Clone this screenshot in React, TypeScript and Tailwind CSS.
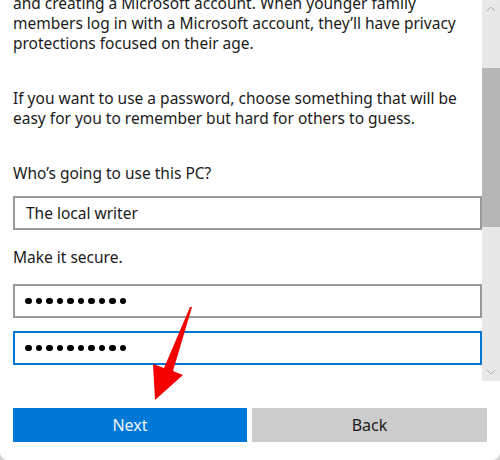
import React from 'react'

const font = { fontFamily: '"Noto Sans", "Open Sans", Arial, sans-serif' }

const Dots: React.FC = () => (
  <div className="flex items-center gap-[4px]">
    {Array.from({ length: 10 }).map((_, i) => (
      <span key={i} className="block w-[6.5px] h-[6.5px] rounded-full bg-black" />
    ))}
  </div>
)

const App: React.FC = () => {
  return (
    <div className="w-[500px] h-[460px] bg-[#d4d4d4] overflow-hidden" style={font}>
      <div className="relative w-[500px] h-[460px] bg-white rounded-b-[8px] flex flex-col">
        {/* scrolled area */}
        <div className="flex h-[381px]">
          <div className="w-[482px] overflow-hidden pl-[13px] text-[15.5px] leading-[20px] text-[#1b1b1b]">
            <div className="mt-[-7px]">
              <p>
                and creating a Microsoft account. When younger family
                <br />
                members log in with a Microsoft account, they’ll have privacy
                <br />
                protections focused on their age.
              </p>
              <p className="mt-[35px]">
                If you want to use a password, choose something that will be
                <br />
                easy for you to remember but hard for others to guess.
              </p>
              <p className="mt-[35px]">Who’s going to use this PC?</p>
              <div className="mt-[13px] h-[34px] border-2 border-[#9a9a9a] flex items-center pl-[11px]">
                The local writer
              </div>
              <p className="mt-[17px]">Make it secure.</p>
              <div className="mt-[17px] h-[34px] border-2 border-[#9a9a9a] flex items-center pl-[10px]">
                <Dots />
              </div>
              <div className="mt-[13px] h-[34px] border-2 border-[#0078d7] flex items-center pl-[10px]">
                <Dots />
              </div>
            </div>
          </div>
          {/* scrollbar */}
          <div className="w-[18px] h-[381px] bg-[#e8e8e8] flex flex-col items-center">
            <svg width="10" height="6" viewBox="0 0 10 6" className="mt-[6px]">
              <path d="M1 5 L5 1 L9 5" fill="none" stroke="#b0b0b0" strokeWidth="1" />
            </svg>
            <div className="mt-[56px] w-[18px] h-[159px] bg-[#b6b6b6]" />
            <div className="flex-1" />
            <svg width="10" height="6" viewBox="0 0 10 6" className="mb-[6px]">
              <path d="M1 1 L5 5 L9 1" fill="none" stroke="#b0b0b0" strokeWidth="1" />
            </svg>
          </div>
        </div>

        {/* buttons */}
        <div className="flex gap-[5px] px-[13px] mt-[27px]">
          <button className="w-[234px] h-[34px] bg-[#0078d7] text-[#eef5fc] text-[16px]">
            Next
          </button>
          <button className="w-[235px] h-[34px] bg-[#cccccc] text-[#1b1b1b] text-[16px]">
            Back
          </button>
        </div>

        {/* red annotation arrow */}
        <svg
          className="absolute left-0 top-0 pointer-events-none"
          width="500"
          height="460"
          viewBox="0 0 500 460"
        >
          <polygon
            points="192,307 173,371 183,375 155,400 153,364 164,368 190,307"
            fill="#f50000"
          />
        </svg>
      </div>
    </div>
  )
}

export default App
